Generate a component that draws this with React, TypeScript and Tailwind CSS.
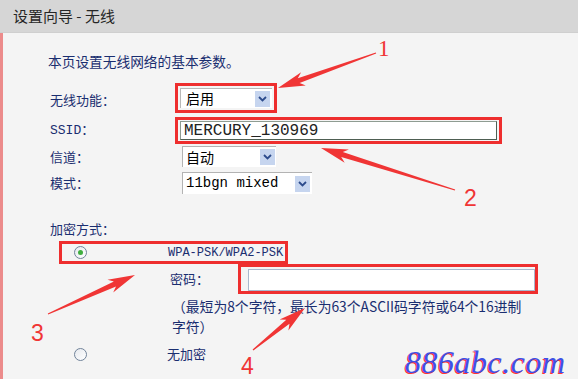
import React from "react";

const CJK = '"Noto Sans CJK SC", "Liberation Sans", sans-serif';
const MONO = '"Liberation Mono", "Noto Sans CJK SC", monospace';

function arrowPts(tx: number, ty: number, px: number, py: number, head = 22, hw = 7, tw0 = 0.6, tw1 = 2.6) {
  const dx = px - tx, dy = py - ty;
  const L = Math.hypot(dx, dy);
  const ux = dx / L, uy = dy / L;
  const nx = -uy, ny = ux;
  const hx = px - ux * head, hy = py - uy * head;
  const bx = px - ux * (head + 5), by = py - uy * (head + 5);
  const p = (x: number, y: number) => `${x.toFixed(1)},${y.toFixed(1)}`;
  return [
    p(tx + nx * tw0, ty + ny * tw0),
    p(hx + nx * tw1, hy + ny * tw1),
    p(bx + nx * hw, by + ny * hw),
    p(px, py),
    p(bx - nx * hw, by - ny * hw),
    p(hx - nx * tw1, hy - ny * tw1),
    p(tx - nx * tw0, ty - ny * tw0),
  ].join(" ");
}

function DropBtn() {
  return (
    <span className="w-[15px] h-[16px] bg-[#c6d5ef] flex items-center justify-center shrink-0">
      <svg width="9" height="6" viewBox="0 0 9 6">
        <path d="M1 1 L4.5 4.5 L8 1" stroke="#2c4b8c" strokeWidth="1.8" fill="none" />
      </svg>
    </span>
  );
}

function Radio({ checked }: { checked?: boolean }) {
  return (
    <span className="w-[13px] h-[13px] rounded-full border border-[#71839a] bg-gradient-to-br from-[#e6e9ee] to-white flex items-center justify-center">
      {checked && <span className="w-[5px] h-[5px] rounded-full bg-[#3fae3f]" />}
    </span>
  );
}

export default function App() {
  return (
    <div className="relative w-[578px] h-[379px] overflow-hidden bg-[#f4f4f4] flex flex-col" style={{ fontFamily: CJK }}>
      <div className="h-[33px] bg-[#d6d6d6] border-b border-[#cfcfcf] flex items-center pl-[13px] text-[15px] text-[#262626] shrink-0">
        设置向导 - 无线
      </div>
      <div className="flex-1 border-l-[3px] border-[#ec8b8b] bg-[#f4f4f4] flex flex-col text-[#1a2e70]">
        <div className="mt-[18px] ml-[45px] h-[20px] leading-[20px] text-[13.7px]">本页设置无线网络的基本参数。</div>

        {/* 无线功能 */}
        <div className="mt-[12px] h-[30px] flex items-center">
          <div className="ml-[47px] w-[125px] text-[13px] pt-[3px]">无线功能：</div>
          <div className="w-[102px] h-[30px] border-[3px] border-[#ee2e2e] p-[2px]">
            <div className="h-full bg-white border-l border-t border-[#b8b8b8] flex items-center justify-between pl-[5px] pr-[2px] text-[14px] text-black">
              <span>启用</span>
              <DropBtn />
            </div>
          </div>
        </div>

        {/* SSID */}
        <div className="mt-[4px] h-[27px] flex items-center">
          <div className="ml-[47px] w-[125px] text-[13px]" style={{ fontFamily: MONO }}>SSID：</div>
          <div className="w-[327px] h-[27px] border-[3px] border-[#ee2e2e] px-[2px] py-[1px]">
            <div className="h-full bg-white border border-[#8f9c92] border-b-[#4e5e52] border-r-[#4e5e52] flex items-center pl-[3px] text-[16px] text-[#222]" style={{ fontFamily: MONO }}>
              MERCURY_130969
            </div>
          </div>
        </div>

        {/* 信道 */}
        <div className="mt-[2px] h-[21px] flex items-center">
          <div className="ml-[47px] w-[132px] text-[13px]">信道：</div>
          <div className="w-[94px] h-[21px] bg-white border-l border-t border-[#b3b3b3] flex items-center justify-between pl-[3px] pr-[1px] text-[14px] text-black">
            <span>自动</span>
            <DropBtn />
          </div>
        </div>

        {/* 模式 */}
        <div className="mt-[5px] h-[22px] flex items-center">
          <div className="ml-[47px] w-[132px] text-[13px]">模式：</div>
          <div className="w-[130px] h-[22px] bg-white border-l border-t border-[#b3b3b3] flex items-center justify-between pl-[3px] pr-[2px] text-[14px] text-black" style={{ fontFamily: MONO }}>
            <span>11bgn mixed</span>
            <DropBtn />
          </div>
        </div>

        {/* 加密方式 */}
        <div className="mt-[25px] h-[20px] leading-[20px] ml-[47px] text-[13px]">加密方式：</div>

        <div className="mt-[2px] ml-[56px] w-[229px] h-[23px] border-[3px] border-[#ee2e2e] flex items-center">
          <div className="ml-[12px] shrink-0"><Radio checked /></div>
          <span className="ml-[81px] text-[12px] text-[#1a2e70] whitespace-nowrap" style={{ fontFamily: MONO }}>WPA-PSK/WPA2-PSK</span>
        </div>

        {/* 密码 */}
        <div className="h-[30px] flex items-center">
          <div className="ml-[167px] w-[68px] text-[13px]">密码：</div>
          <div className="w-[300px] h-[30px] border-[3px] border-[#ee2e2e] pl-[7px] pr-[0px] pt-[2px] pb-[0px]">
            <div className="h-[22px] bg-white border border-[#a9b8cd]" />
          </div>
        </div>

        <div className="mt-[2px] ml-[169px] text-[13.8px] leading-[20px] whitespace-nowrap">
          （最短为8个字符，最长为63个ASCII码字符或64个16进制<br />字符）
        </div>

        <div className="mt-[8px] h-[20px] flex items-center">
          <div className="ml-[71px]"><Radio /></div>
          <span className="ml-[80px] text-[13px]">无加密</span>
        </div>
      </div>

      {/* annotations */}
      <svg className="absolute left-0 top-0 pointer-events-none" width="578" height="379">
        <polygon points={arrowPts(376, 53, 278, 88)} fill="#f03535" />
        <polygon points={arrowPts(455, 190, 321, 148)} fill="#f03535" />
        <polygon points={arrowPts(48, 314, 135, 275)} fill="#f03535" />
        <polygon points={arrowPts(253, 350, 305, 308)} fill="#f03535" />
      </svg>
      <span className="absolute left-[378px] top-[37px] text-[23px] leading-[23px] text-[#f03535]" style={{ fontFamily: '"Liberation Serif", serif' }}>1</span>
      <span className="absolute left-[464px] top-[187px] text-[23px] leading-[23px] text-[#f03535]" style={{ fontFamily: '"Liberation Sans", sans-serif' }}>2</span>
      <span className="absolute left-[31px] top-[322px] text-[23px] leading-[23px] text-[#f03535]" style={{ fontFamily: '"Liberation Sans", sans-serif' }}>3</span>
      <span className="absolute left-[241px] top-[355px] text-[23px] leading-[23px] text-[#f03535]" style={{ fontFamily: '"Liberation Sans", sans-serif' }}>4</span>
      <span className="absolute left-[405px] top-[346px] text-[32px] leading-[32px] tracking-[0.5px] italic text-[#3d52e6] [text-shadow:-1px_1px_0_#ff3535]" style={{ fontFamily: '"Liberation Serif", serif' }}>886abc.com</span>
    </div>
  );
}
